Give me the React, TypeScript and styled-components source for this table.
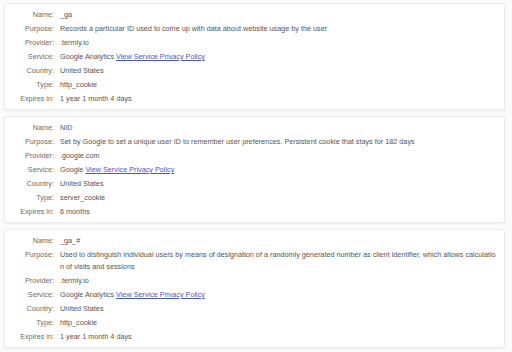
import React from "react";
import styled, { createGlobalStyle } from "styled-components";

const GlobalStyle = createGlobalStyle`
  html, body {
    margin: 0;
    padding: 0;
    background: #fbfbfb;
  }
  body {
    font-family: "Liberation Sans", Arial, sans-serif;
  }
`;

const Page = styled.div`
  width: 512px;
  height: 352px;
  box-sizing: border-box;
  padding: 3px 7px 0 4px;
  display: flex;
  flex-direction: column;
  gap: 6px;
  overflow: hidden;
`;

const Card = styled.div`
  background: #ffffff;
  border: 1px solid #ebebeb;
  border-radius: 2px;
  box-shadow: 0 1px 2px rgba(0, 0, 0, 0.06);
  padding: 4px 6px 3px 0;
`;

const Grid = styled.dl`
  margin: 0;
  display: grid;
  grid-template-columns: 49px 1fr;
  column-gap: 6px;
  font-size: 7.25px;
  line-height: 12px;
`;

const Label = styled.dt`
  text-align: right;
  color: #6b6b6b;
  padding: 1px 0;
  white-space: nowrap;
`;

const Value = styled.dd`
  margin: 0;
  color: #555555;
  padding: 1px 0;
  word-break: break-all;
`;

const PolicyLink = styled.a`
  color: #4a57c9;
  text-decoration: underline;
`;

type Cookie = {
  name: string;
  purpose: string;
  provider: string;
  service: string;
  country: string;
  type: string;
  expires: string;
};

const cookies: Cookie[] = [
  {
    name: "_ga",
    purpose:
      "Records a particular ID used to come up with data about website usage by the user",
    provider: ".termly.io",
    service: "Google Analytics",
    country: "United States",
    type: "http_cookie",
    expires: "1 year 1 month 4 days",
  },
  {
    name: "NID",
    purpose:
      "Set by Google to set a unique user ID to remember user preferences. Persistent cookie that stays for 182 days",
    provider: ".google.com",
    service: "Google",
    country: "United States",
    type: "server_cookie",
    expires: "6 months",
  },
  {
    name: "_ga_#",
    purpose:
      "Used to distinguish individual users by means of designation of a randomly generated number as client identifier, which allows calculation of visits and sessions",
    provider: ".termly.io",
    service: "Google Analytics",
    country: "United States",
    type: "http_cookie",
    expires: "1 year 1 month 4 days",
  },
];

const CookieCard: React.FC<{ cookie: Cookie }> = ({ cookie }) => (
  <Card>
    <Grid>
      <Label>Name:</Label>
      <Value>{cookie.name}</Value>
      <Label>Purpose:</Label>
      <Value>{cookie.purpose}</Value>
      <Label>Provider:</Label>
      <Value>{cookie.provider}</Value>
      <Label>Service:</Label>
      <Value>
        {cookie.service} <PolicyLink href="#">View Service Privacy Policy</PolicyLink>
      </Value>
      <Label>Country:</Label>
      <Value>{cookie.country}</Value>
      <Label>Type:</Label>
      <Value>{cookie.type}</Value>
      <Label>Expires in:</Label>
      <Value>{cookie.expires}</Value>
    </Grid>
  </Card>
);

export default function App() {
  return (
    <>
      <GlobalStyle />
      <Page>
        {cookies.map((c) => (
          <CookieCard key={c.name} cookie={c} />
        ))}
      </Page>
    </>
  );
}
